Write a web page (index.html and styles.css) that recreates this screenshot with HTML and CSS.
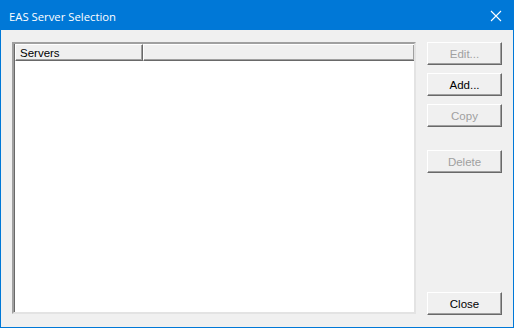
FILE: index.html
```html
<!DOCTYPE html>
<html lang="en">
<head>
  <meta charset="UTF-8" />
  <title>EAS Server Selection</title>
  <link rel="stylesheet" href="styles.css">
</head>
<body>
  <div class="dialog">
    <div class="titlebar">
      <span class="title">EAS Server Selection</span>
      <svg class="close" width="12" height="12" viewBox="0 0 12 12">
        <path d="M1 1 L11 11 M11 1 L1 11" stroke="#fff" stroke-width="1.1" fill="none"/>
      </svg>
    </div>
    <div class="content">
      <div class="listview">
        <div class="header">
          <div class="col first">Servers</div>
          <div class="col rest"></div>
        </div>
        <div class="rows"></div>
      </div>
      <div class="buttons">
        <button class="btn" disabled>Edit...</button>
        <button class="btn">Add...</button>
        <button class="btn" disabled>Copy</button>
        <button class="btn gap" disabled>Delete</button>
        <button class="btn bottom">Close</button>
      </div>
    </div>
  </div>
</body>
</html>
```

FILE: styles.css
```css
* {
  margin: 0;
  padding: 0;
  box-sizing: border-box;
}
body {
  font-family: 'Liberation Sans', Arial, sans-serif;
  font-size: 11px;
  background: #f0f0f0;
}
.dialog {
  width: 514px;
  height: 328px;
  border: 1px solid #0078d7;
  background: #f0f0f0;
  display: flex;
  flex-direction: column;
}
.titlebar {
  height: 29px;
  background: #0078d7;
  color: #fff;
  display: flex;
  align-items: center;
  justify-content: space-between;
  padding: 0 11px 0 8px;
}
.title {
  font-family: 'Open Sans', 'Noto Sans', sans-serif;
  font-size: 11.3px;
  margin-top: 1px;
}
.close {
  display: block;
}
.content {
  flex: 1;
  display: flex;
  gap: 11px;
  padding: 12px 11px 12px 11px;
}
.listview {
  flex: 1;
  margin-bottom: 1px;
  background: #fff;
  border-style: solid;
  border-width: 2px;
  border-color: #a0a0a0 #e3e3e3 #e3e3e3 #a0a0a0;
  box-shadow: inset 1px 1px 0 #696969;
  display: flex;
  flex-direction: column;
}
.header {
  display: flex;
  height: 17px;
  margin: 0 0 0 1px;
  background: #f0f0f0;
}
.col {
  height: 17px;
  line-height: 16px;
  padding-left: 4px;
  color: #000;
  font-size: 11.5px;
  border-style: solid;
  border-width: 1px;
  border-color: #fff #696969 #696969 #fff;
  box-shadow: inset -1px -1px 0 #a0a0a0;
}
.col.first {
  width: 128px;
}
.col.rest {
  flex: 1;
  border-right: none;
}
.rows {
  flex: 1;
}
.buttons {
  width: 75px;
  display: flex;
  flex-direction: column;
  gap: 8px;
}
.btn {
  width: 75px;
  height: 23px;
  padding-top: 1px;
  font-family: 'Liberation Sans', Arial, sans-serif;
  font-size: 11.5px;
  color: #000;
  background: #f0f0f0;
  border-style: solid;
  border-width: 1px;
  border-color: #fff #696969 #696969 #fff;
  box-shadow: inset -1px -1px 0 #a0a0a0;
}
.btn:disabled {
  color: #a0a0a0;
}
.btn.gap {
  margin-top: 15px;
}
.btn.bottom {
  margin-top: auto;
}
```
